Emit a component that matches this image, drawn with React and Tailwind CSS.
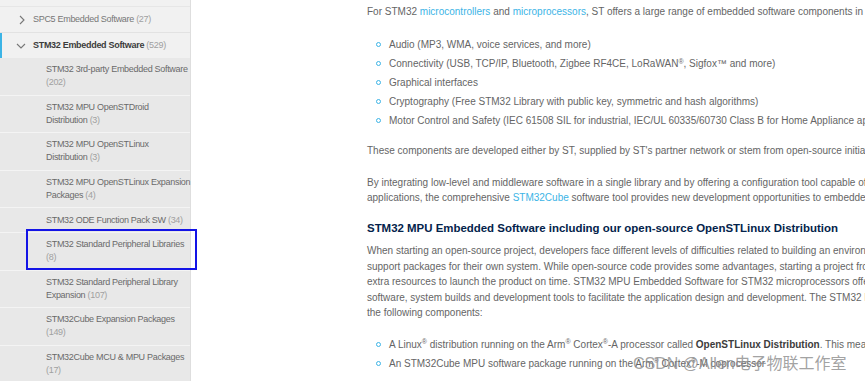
import React from 'react'

const subItems = [
    { lines: ['STM32 3rd-party Embedded Software'], tail: '', count: '(202)', countOwnLine: true },
    { lines: ['STM32 MPU OpenSTDroid'], tail: 'Distribution', count: '(3)' },
    { lines: ['STM32 MPU OpenSTLinux'], tail: 'Distribution', count: '(3)' },
    { lines: ['STM32 MPU OpenSTLinux Expansion'], tail: 'Packages', count: '(4)' },
    { lines: [], tail: 'STM32 ODE Function Pack SW', count: '(34)' },
    { lines: ['STM32 Standard Peripheral Libraries'], tail: '', count: '(8)', countOwnLine: true },
    { lines: ['STM32 Standard Peripheral Library'], tail: 'Expansion', count: '(107)' },
    { lines: ['STM32Cube Expansion Packages'], tail: '', count: '(149)', countOwnLine: true },
    { lines: ['STM32Cube MCU & MPU Packages'], tail: '', count: '(17)', countOwnLine: true },
]

const Link = ({ children }) => <span className="text-[#3cb4e6]">{children}</span>

const Bullet = ({ children }) => (
    <li className="flex items-center h-[19px] whitespace-nowrap">
        <span className="w-[5px] h-[5px] rounded-full border border-[#3cb4e6] ml-[9px] mr-[8px] shrink-0"></span>
        <span>{children}</span>
    </li>
)

const Sidebar = () => {
    return (
        <div className="w-[191px] shrink-0 h-full bg-[#f1f1f1] border-r border-[#dedede] text-[9px] tracking-[-0.3px] whitespace-nowrap">
            <div className="h-[7px] border-b border-[#e6e6e6]"></div>
            <div className="h-[26px] flex items-center border-b border-[#e2e2e2] text-[#777]">
                <svg width="6" height="10" viewBox="0 0 6 10" className="ml-[19px] mr-[8px]">
                    <polyline points="1,1 5,5 1,9" fill="none" stroke="#777" strokeWidth="1.1" />
                </svg>
                <span>SPC5 Embedded Software <span className="text-[#a0a0a0]">(27)</span></span>
            </div>
            <div className="relative h-[25px] flex items-center">
                <div className="absolute left-0 top-0 bottom-0 w-[2px] bg-[#3cb4e6]"></div>
                <svg width="10" height="6" viewBox="0 0 10 6" className="ml-[16px] mr-[7px]">
                    <polyline points="1,1 5,5 9,1" fill="none" stroke="#777" strokeWidth="1.1" />
                </svg>
                <span className="font-bold text-[#3c3c3c]">STM32 Embedded Software <span className="font-normal text-[#a0a0a0]">(529)</span></span>
            </div>
            <div className="bg-[#e8e8e8]">
                {subItems.map((item, i) => (
                    <div key={i} className="pl-[46px] py-[5.3px] leading-[13px] text-[#6a6a6a] border-b border-[#f4f4f4]">
                        {item.lines.map((l, j) => (
                            <div key={j}>{l}</div>
                        ))}
                        {item.countOwnLine ? (
                            <div className="text-[#a0a0a0]">{item.count}</div>
                        ) : (
                            <div>{item.tail} <span className="text-[#a0a0a0]">{item.count}</span></div>
                        )}
                    </div>
                ))}
            </div>
        </div>
    )
}

const Content = () => {
    return (
        <div className="flex-1 pl-[176px] text-[10px] text-[#656565] whitespace-nowrap">
            <p className="pt-[4px] h-[15px] leading-[15px]">
                For STM32 <Link>microcontrollers</Link> and <Link>microprocessors</Link>, ST offers a large range of embedded software components in order to build complete applications:
            </p>
            <ul className="mt-[20px]">
                <Bullet>Audio (MP3, WMA, voice services, and more)</Bullet>
                <Bullet>Connectivity (USB, TCP/IP, Bluetooth, Zigbee RF4CE, LoRaWAN<sup className="text-[7px]">®</sup>, Sigfox™ and more)</Bullet>
                <Bullet>Graphical interfaces</Bullet>
                <Bullet>Cryptography (Free STM32 Library with public key, symmetric and hash algorithms)</Bullet>
                <Bullet>Motor Control and Safety (IEC 61508 SIL for industrial, IEC/UL 60335/60730 Class B for Home Appliance applications)</Bullet>
            </ul>
            <p className="mt-[13px] leading-[15px]">
                These components are developed either by ST, supplied by ST's partner network or stem from open-source initiatives.
            </p>
            <p className="mt-[17px] leading-[15px]">
                By integrating low-level and middleware software in a single library and by offering a configuration tool capable of generating initialization code for<br />
                applications, the comprehensive <Link>STM32Cube</Link> software tool provides new development opportunities to embedded developers.
            </p>
            <h2 className="mt-[16px] text-[11.45px] font-bold text-[#03234b] leading-[15px]">
                STM32 MPU Embedded Software including our open-source OpenSTLinux Distribution
            </h2>
            <p className="mt-[7px] leading-[15.6px]">
                When starting an open-source project, developers face different levels of difficulties related to building an environment, such as creating the board<br />
                support packages for their own system. While open-source code provides some advantages, starting a project from scratch can require<br />
                extra resources to launch the product on time. STM32 MPU Embedded Software for STM32 microprocessors offers a complete<br />
                software, system builds and development tools to facilitate the application design and development. The STM32 MPU Embedded Software includes<br />
                the following components:
            </p>
            <ul className="mt-[14px]">
                <Bullet>A Linux<sup className="text-[7px]">®</sup> distribution running on the Arm<sup className="text-[7px]">®</sup> Cortex<sup className="text-[7px]">®</sup>-A processor called <b className="text-[#3c3c3c]">OpenSTLinux Distribution</b>. This means</Bullet>
                <Bullet>An STM32Cube MPU software package running on the Arm<sup className="text-[7px]">®</sup> Cortex<sup className="text-[7px]">®</sup>-M coprocessor</Bullet>
            </ul>
        </div>
    )
}

export default function App() {
    return (
        <div className="relative w-[865px] h-[381px] overflow-hidden bg-white flex font-['Liberation_Sans',Arial,sans-serif]">
            <Sidebar />
            <Content />
            <div className="absolute left-[26px] top-[229px] w-[171px] h-[41px] border-2 border-[#1414e6]"></div>
            <div className="absolute left-[633px] top-[354px] text-[16px] leading-[20px] text-[#8a8a8a]/80 whitespace-nowrap font-['Liberation_Sans','Noto_Sans_CJK_SC',sans-serif]">
                CSDN @Allen电子物联工作室
            </div>
        </div>
    )
}
